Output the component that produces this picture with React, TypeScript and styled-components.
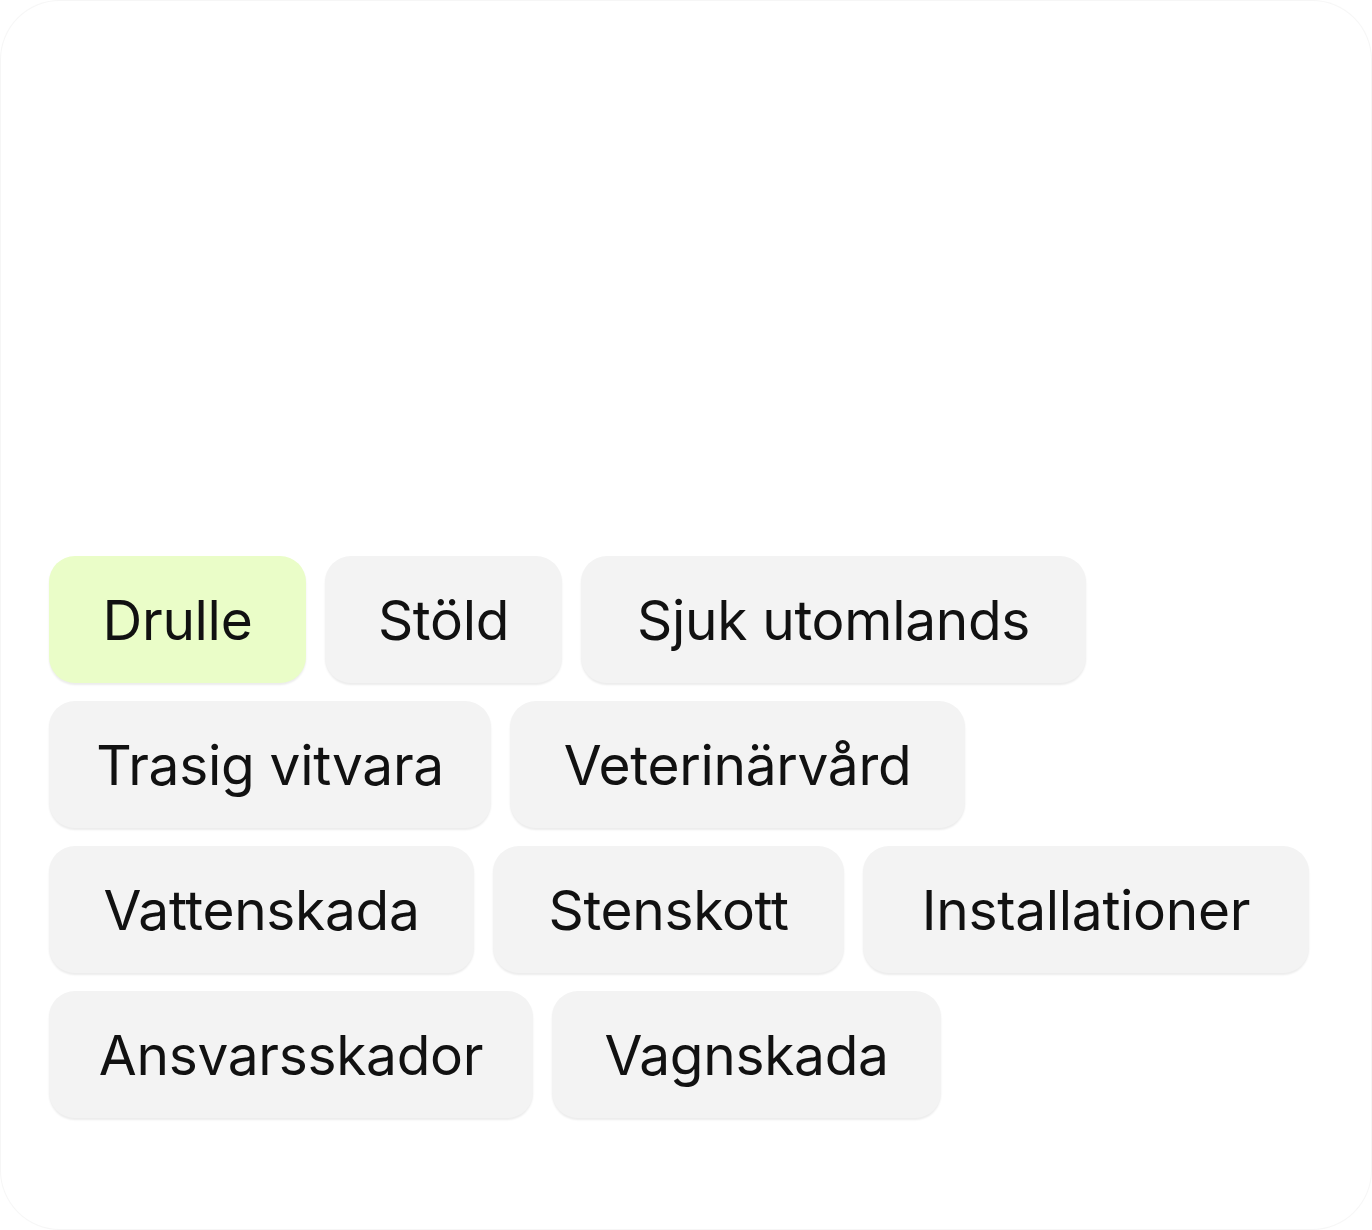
import styled, { createGlobalStyle } from "styled-components";

const GlobalStyle = createGlobalStyle`
  html, body {
    margin: 0;
    padding: 0;
    background: #ffffff;
  }
`;

const Card = styled.div`
  box-sizing: border-box;
  width: 1372px;
  height: 1230px;
  border-radius: 60px;
  border: 1px solid rgba(0, 0, 0, 0.035);
  background: #ffffff;
  display: flex;
  flex-direction: column;
  justify-content: flex-end;
  padding: 0 48px 111px 48px;
  font-family: Inter, "Liberation Sans", sans-serif;
`;

const ChipGroup = styled.div`
  display: flex;
  flex-direction: column;
  gap: 18px;
`;

const Row = styled.div`
  display: flex;
  gap: 19px;
`;

const Chip = styled.div<{ $active?: boolean; $width: number }>`
  box-sizing: border-box;
  width: ${({ $width }) => $width}px;
  height: 127px;
  display: flex;
  align-items: center;
  justify-content: center;
  border-radius: 26px;
  background: ${({ $active }) => ($active ? "#eafdc8" : "#f3f3f3")};
  box-shadow: 0 2px 2px rgba(0, 0, 0, 0.08);
  color: #111111;
  font-size: 55px;
  letter-spacing: -0.3px;
  white-space: nowrap;
`;

const rows: [string, number][][] = [
  [
    ["Drulle", 257],
    ["Stöld", 237],
    ["Sjuk utomlands", 505],
  ],
  [
    ["Trasig vitvara", 442],
    ["Veterinärvård", 455],
  ],
  [
    ["Vattenskada", 425],
    ["Stenskott", 351],
    ["Installationer", 446],
  ],
  [
    ["Ansvarsskador", 484],
    ["Vagnskada", 389],
  ],
];

export default function App() {
  return (
    <>
      <GlobalStyle />
      <Card>
        <ChipGroup>
          {rows.map((row, i) => (
            <Row key={i}>
              {row.map(([label, width]) => (
                <Chip key={label} $width={width} $active={label === "Drulle"}>
                  {label}
                </Chip>
              ))}
            </Row>
          ))}
        </ChipGroup>
      </Card>
    </>
  );
}
